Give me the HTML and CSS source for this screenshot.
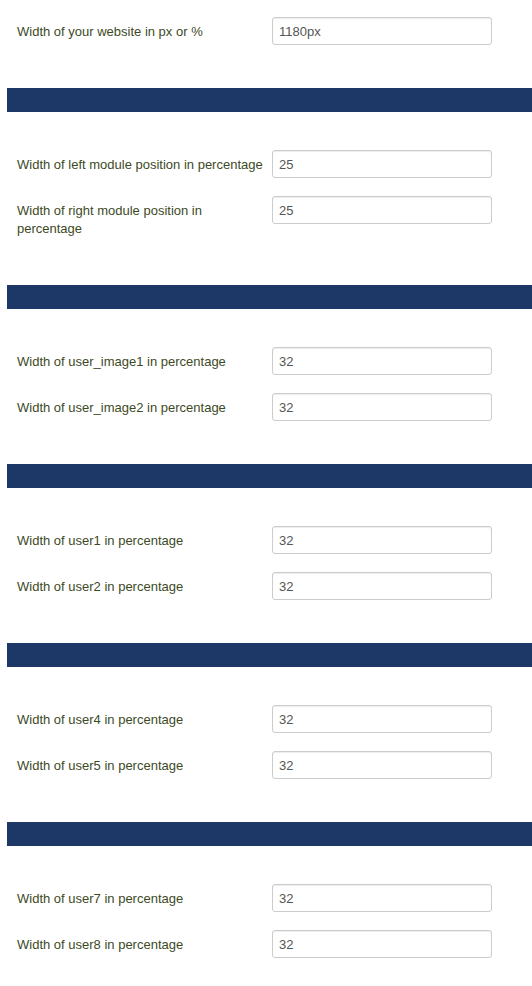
FILE: index.html
```html
<!DOCTYPE html>
<html lang="en">
<head>
  <meta charset="UTF-8">
  <meta name="viewport" content="width=device-width, initial-scale=1">
  <title>Layout widths</title>
  <link rel="stylesheet" href="styles.css">
</head>
<body>
  <div class="panel">
    <div class="group first">
      <div class="row">
        <label for="w-site">Width of your website in px or %</label>
        <input type="text" id="w-site" value="1180px">
      </div>
    </div>

    <div class="group">
      <div class="bar"></div>
      <div class="row">
        <label for="w-left">Width of left module position in percentage</label>
        <input type="text" id="w-left" value="25">
      </div>
      <div class="row">
        <label for="w-right">Width of right module position in percentage</label>
        <input type="text" id="w-right" value="25">
      </div>
    </div>

    <div class="group">
      <div class="bar"></div>
      <div class="row">
        <label for="w-img1">Width of user_image1 in percentage</label>
        <input type="text" id="w-img1" value="32">
      </div>
      <div class="row">
        <label for="w-img2">Width of user_image2 in percentage</label>
        <input type="text" id="w-img2" value="32">
      </div>
    </div>

    <div class="group">
      <div class="bar"></div>
      <div class="row">
        <label for="w-u1">Width of user1 in percentage</label>
        <input type="text" id="w-u1" value="32">
      </div>
      <div class="row">
        <label for="w-u2">Width of user2 in percentage</label>
        <input type="text" id="w-u2" value="32">
      </div>
    </div>

    <div class="group">
      <div class="bar"></div>
      <div class="row">
        <label for="w-u4">Width of user4 in percentage</label>
        <input type="text" id="w-u4" value="32">
      </div>
      <div class="row">
        <label for="w-u5">Width of user5 in percentage</label>
        <input type="text" id="w-u5" value="32">
      </div>
    </div>

    <div class="group">
      <div class="bar"></div>
      <div class="row">
        <label for="w-u7">Width of user7 in percentage</label>
        <input type="text" id="w-u7" value="32">
      </div>
      <div class="row">
        <label for="w-u8">Width of user8 in percentage</label>
        <input type="text" id="w-u8" value="32">
      </div>
    </div>
  </div>
</body>
</html>
```

FILE: styles.css
```css
body { margin: 0; background: #fff; font-family: "Liberation Sans", Arial, sans-serif; font-size: 13px; }
.panel { padding: 17px 0 0 7px; }
.group { padding-bottom: 25px; }
.bar { height: 24px; background: #1d3867; margin-bottom: 38px; }
.row { display: flex; align-items: flex-start; margin: 0 0 18px 10px; }
.row label { width: 250px; margin-right: 5px; padding: 6px 0 4px; line-height: 18px; color: #3d4a1f; }
.row input { box-sizing: border-box; width: 220px; height: 28px; margin: 0; padding: 4px 6px; border: 1px solid #ccc; border-radius: 3px; box-shadow: inset 0 1px 1px rgba(0,0,0,0.075); font-family: "Liberation Sans", Arial, sans-serif; font-size: 13px; color: #555; background: #fff; }
```
